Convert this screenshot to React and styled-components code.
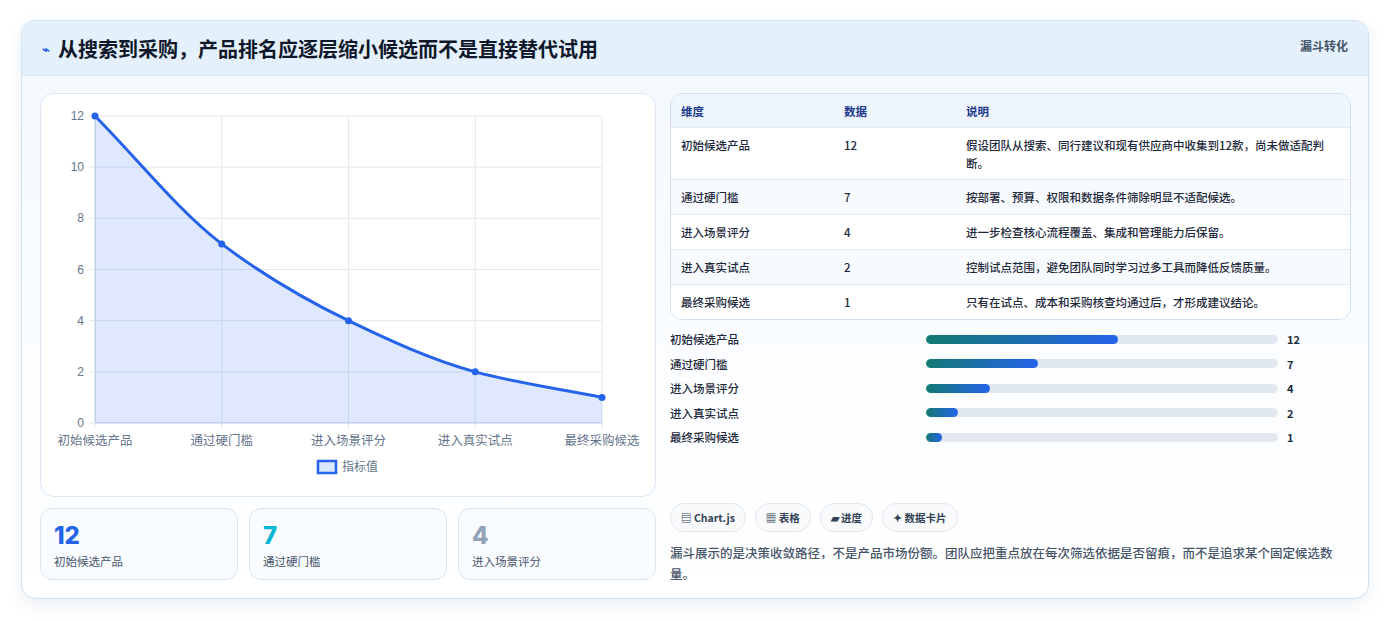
import React from "react";
import styled, { createGlobalStyle } from "styled-components";

const G = createGlobalStyle`
  body{margin:0;background:#fff;font-family:"Noto Sans CJK SC","Noto Sans",sans-serif;}
`;
const Page = styled.div`padding:20px 21px 22px 21px;`;
const Card = styled.div`
  border:1px solid #cfe3ef;border-radius:14px;overflow:hidden;height:577px;
  background:linear-gradient(180deg,#f3f9fe 0%,#fbfdff 60%,#ffffff 100%);
  box-shadow:0 6px 18px rgba(15,60,120,.08);
`;
const Header = styled.div`
  height:54px;display:flex;align-items:center;justify-content:space-between;
  padding:0 20px;background:#e4f1fc;border-bottom:1px solid #d6e8f6;
`;
const Title = styled.h1`margin:0;font-size:20px;font-weight:700;color:#0f172a;display:flex;align-items:center;gap:8px;`;
const Tag = styled.span`font-size:12px;color:#475569;font-weight:700;align-self:flex-start;margin-top:16px;`;
const Body = styled.div`display:grid;grid-template-columns:616px 681px;gap:14px;padding:17px 18px 0 18px;`;
const Col = styled.div`display:flex;flex-direction:column;`;
const ChartBox = styled.div`height:402px;border:1px solid #dbe7f3;border-radius:14px;background:#fff;position:relative;`;
const Stats = styled.div`display:grid;grid-template-columns:repeat(3,1fr);gap:11px;margin-top:11px;`;
const Stat = styled.div`height:72px;border:1px solid #d8e6f3;border-radius:12px;background:#f9fcff;padding:12px 13px;box-sizing:border-box;`;
const Num = styled.div`font-size:24px;font-weight:800;color:${p=>p.c};line-height:30px;font-family:"Inter","Noto Sans CJK SC",sans-serif;`;
const SLabel = styled.div`font-size:11.5px;color:#475569;margin-top:2px;`;
const Table = styled.div`border:1px solid #cfdfee;border-radius:12px;overflow:hidden;background:#fff;`;
const Row = styled.div`display:grid;grid-template-columns:163px 122px 1fr;align-items:${p=>p.top?"start":"center"};
  min-height:${p=>p.h}px;box-sizing:border-box;padding:${p=>p.top?"8px":"0"} 10px 0 10px;font-size:11.5px;color:${p=>p.head?"#1e3a8a":"#1e293b"};
  font-weight:${p=>p.head?700:500};background:${p=>p.head?"#eef5fd":p.alt?"#f8fbfe":"#fff"};border-top:${p=>p.first?"none":"1px solid #e3ecf5"};line-height:18px;`;
const Bars = styled.div`display:flex;flex-direction:column;gap:6.6px;margin-top:10px;`;
const BarRow = styled.div`display:grid;grid-template-columns:256px 352px 1fr;align-items:center;height:18px;font-size:11.5px;color:#1e293b;font-weight:500;`;
const Track = styled.div`height:9px;border-radius:5px;background:#e2e8f0;overflow:hidden;`;
const Fill = styled.div`height:100%;border-radius:5px;background:linear-gradient(90deg,#137a72,#2563eb);`;
const Val = styled.span`padding-left:9px;font-weight:700;font-size:11px;`;
const Chips = styled.div`display:flex;gap:9px;margin-top:57px;`;
const Chip = styled.span`height:27px;padding:0 10px;border:1px solid #e2e8f0;border-radius:14px;background:#f8fafc;font-size:10.5px;font-weight:700;color:#334155;display:flex;align-items:center;gap:3px;`;
const Note = styled.p`margin:10px 0 0;font-size:12.5px;line-height:21px;color:#475569;font-weight:500;`;

const labels=["初始候选产品","通过硬门槛","进入场景评分","进入真实试点","最终采购候选"];
const vals=[12,7,4,2,1];
const x0=54,x1=561,yT=22,yB=329;
const px=i=>x0+(x1-x0)*i/4, py=v=>yB-(yB-yT)*v/12;
const pts=vals.map((v,i)=>[px(i),py(v)]);
function curve(){
  const n=pts.length;const d=[],m=[];
  for(let i=0;i<n-1;i++)d.push((pts[i+1][1]-pts[i][1])/(pts[i+1][0]-pts[i][0]));
  for(let i=0;i<n;i++){if(i===0)m.push(d[0]);else if(i===n-1)m.push(d[n-2]);else m.push(d[i-1]*d[i]<=0?0:2/(1/d[i-1]+1/d[i]));}
  let s=`M${pts[0][0]},${pts[0][1]}`;
  for(let i=0;i<n-1;i++){const h=(pts[i+1][0]-pts[i][0])/3;
    s+=` C${pts[i][0]+h},${pts[i][1]+m[i]*h} ${pts[i+1][0]-h},${pts[i+1][1]-m[i+1]*h} ${pts[i+1][0]},${pts[i+1][1]}`;}
  return s;
}
const c=curve();

function Chart(){
  return <svg width="614" height="400" style={{display:"block"}}>
    {[0,2,4,6,8,10,12].map(v=><g key={v}><line x1={x0-6} x2={x1} y1={py(v)} y2={py(v)} stroke="#e2e8f0"/>
      <text x={x0-11} y={py(v)+4} textAnchor="end" fontSize="12" fill="#64748b" fontFamily="Liberation Sans">{v}</text></g>)}
    {[0,1,2,3,4].map(i=><line key={i} x1={px(i)} x2={px(i)} y1={yT} y2={yB+6} stroke="#e2e8f0"/>)}
    <line x1={x0} x2={x1} y1={yB} y2={yB} stroke="#cbd5e1"/>
    <line x1={x0} x2={x0} y1={yT} y2={yB} stroke="#cbd5e1"/>
    <path d={c+` L${x1},${yB} L${x0},${yB} Z`} fill="rgba(37,99,235,.15)"/>
    <path d={c} fill="none" stroke="#2563eb" strokeWidth="3"/>
    {pts.map((p,i)=><circle key={i} cx={p[0]} cy={p[1]} r="3.5" fill="#2563eb"/>)}
    {labels.map((l,i)=><text key={i} x={px(i)} y={351} textAnchor="middle" fontSize="12.5" fill="#64748b">{l}</text>)}
    <rect x="277" y="367" width="18" height="12" fill="#dbe7fb" stroke="#2563eb" strokeWidth="2.5"/>
    <text x="301" y="377" fontSize="12" fill="#64748b">指标值</text>
  </svg>;
}

const rows=[["初始候选产品","12","假设团队从搜索、同行建议和现有供应商中收集到12款，尚未做适配判断。"],
["通过硬门槛","7","按部署、预算、权限和数据条件筛除明显不适配候选。"],
["进入场景评分","4","进一步检查核心流程覆盖、集成和管理能力后保留。"],
["进入真实试点","2","控制试点范围，避免团队同时学习过多工具而降低反馈质量。"],
["最终采购候选","1","只有在试点、成本和采购核查均通过后，才形成建议结论。"]];

export default function App(){
  return <Page><G/><Card>
    <Header><Title><span style={{color:"#2563eb",fontSize:13}}>⌁</span>从搜索到采购，产品排名应逐层缩小候选而不是直接替代试用</Title><Tag>漏斗转化</Tag></Header>
    <Body>
      <Col>
        <ChartBox><Chart/></ChartBox>
        <Stats>
          <Stat><Num c="#2563eb">12</Num><SLabel>初始候选产品</SLabel></Stat>
          <Stat><Num c="#06b6d4">7</Num><SLabel>通过硬门槛</SLabel></Stat>
          <Stat><Num c="#94a3b8">4</Num><SLabel>进入场景评分</SLabel></Stat>
        </Stats>
      </Col>
      <Col>
        <Table>
          <Row head first h={33}><span>维度</span><span>数据</span><span>说明</span></Row>
          {rows.map((r,i)=><Row key={i} h={i===0?52:35} alt={i%2===1} top={i===0}><span>{r[0]}</span><span>{r[1]}</span><span>{r[2]}</span></Row>)}
        </Table>
        <Bars>{rows.map((r,i)=><BarRow key={i}><span>{r[0]}</span><Track><Fill style={{width:`${vals[i]/22*100}%`}}/></Track><Val>{r[1]}</Val></BarRow>)}</Bars>
        <Chips><Chip>▤ Chart.js</Chip><Chip>▦ 表格</Chip><Chip>▰ 进度</Chip><Chip>✦ 数据卡片</Chip></Chips>
        <Note>漏斗展示的是决策收敛路径，不是产品市场份额。团队应把重点放在每次筛选依据是否留痕，而不是追求某个固定候选数量。</Note>
      </Col>
    </Body>
  </Card></Page>;
}
